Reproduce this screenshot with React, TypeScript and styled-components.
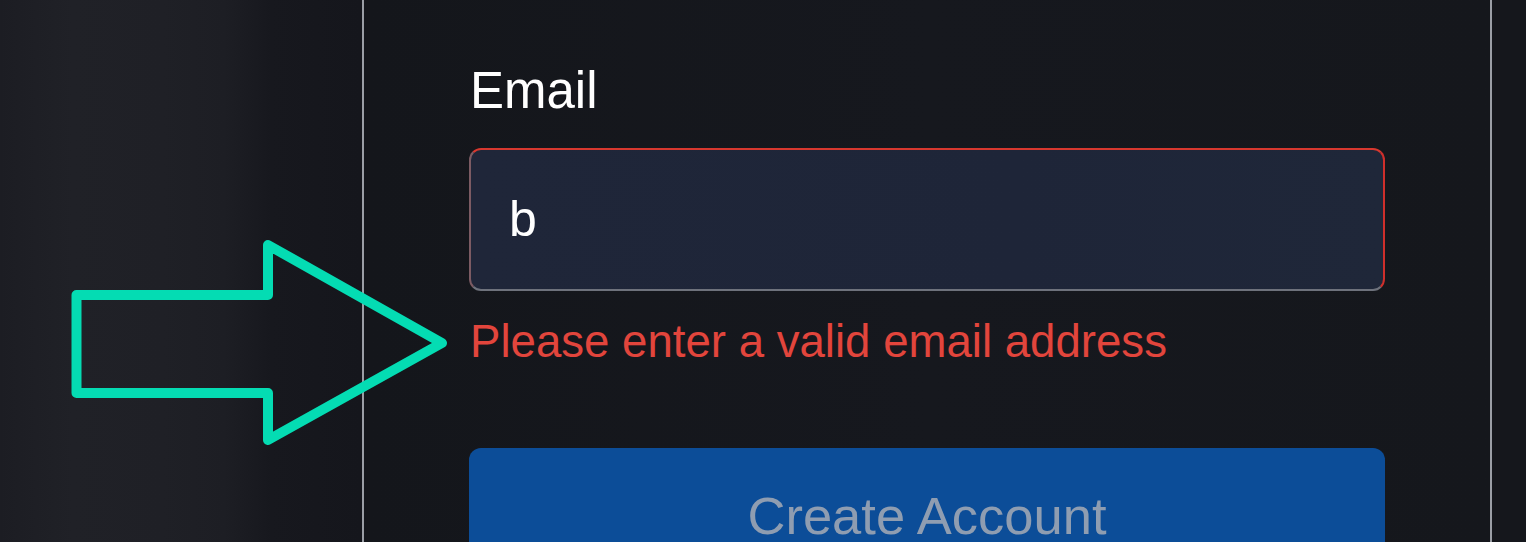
import React from "react";
import styled, { createGlobalStyle } from "styled-components";

const GlobalStyle = createGlobalStyle`
  html, body {
    margin: 0;
    padding: 0;
    background: #15171d;
    overflow: hidden;
  }
  * { box-sizing: border-box; }
`;

const Page = styled.div`
  position: relative;
  width: 1526px;
  height: 542px;
  display: flex;
  flex-direction: row;
  overflow: hidden;
  font-family: "Liberation Sans", Arial, sans-serif;
  background: #15171d;
`;

const SideArea = styled.div<{ $w: number; $bg: string }>`
  width: ${(p) => p.$w}px;
  flex: 0 0 auto;
  height: 100%;
  background: ${(p) => p.$bg};
`;

const Divider = styled.div`
  width: 2px;
  flex: 0 0 auto;
  height: 100%;
  background: #9b9ea5;
`;

const Panel = styled.div`
  flex: 1;
  height: 100%;
  background: linear-gradient(90deg, #14161b 0%, #16181e 50%, #15171c 100%);
  padding: 63px 105px 0 105px;
  display: flex;
  flex-direction: column;
  & > * {
    flex-shrink: 0;
  }
`;

const Label = styled.label`
  font-size: 51px;
  line-height: 56px;
  color: #ffffff;
  padding-left: 1px;
`;

const Input = styled.div`
  margin-top: 29px;
  height: 143px;
  border-radius: 12px;
  border: 2px solid;
  border-color: #d7382f #cf2f2b #6e727c #7c5b63;
  background: linear-gradient(90deg, #1f2639 0%, #1e2538 60%, #1f2739 100%);
  display: flex;
  align-items: center;
  padding-left: 38px;
  font-size: 50px;
  line-height: 60px;
  color: #ffffff;
  padding-bottom: 2px;
`;

const ErrorText = styled.div`
  margin-top: 25px;
  font-size: 45.6px;
  line-height: 52px;
  color: #e2453c;
  padding-left: 1px;
`;

const Button = styled.button`
  margin-top: 80px;
  height: 136px;
  border: none;
  border-radius: 12px;
  background: #0c4d98;
  color: #8f9db1;
  font-family: "Liberation Sans", Arial, sans-serif;
  font-size: 52.5px;
  line-height: 60px;
  padding: 38px 0 38px;
  display: flex;
  justify-content: center;
  align-items: flex-start;
`;

const ArrowOverlay = styled.svg`
  position: absolute;
  left: 0;
  top: 0;
  width: 1526px;
  height: 542px;
  pointer-events: none;
`;

export default function App() {
  return (
    <>
      <GlobalStyle />
      <Page>
        <SideArea
          $w={362}
          $bg="linear-gradient(90deg, #1c1d23 0%, #202127 20%, #1f2026 45%, #1d1e24 62%, #17181e 75%, #15161c 100%)"
        />
        <Divider />
        <Panel>
          <Label>Email</Label>
          <Input>b</Input>
          <ErrorText>Please enter a valid email address</ErrorText>
          <Button>Create Account</Button>
        </Panel>
        <Divider />
        <SideArea $w={34} $bg="#15171c" />
        <ArrowOverlay viewBox="0 0 1526 542">
          <path
            d="M76.5 295 L268 295 L268 245 L442 343 L268 440 L268 393 L76.5 393 Z"
            fill="none"
            stroke="#04dcb3"
            strokeWidth={10}
            strokeLinejoin="round"
          />
        </ArrowOverlay>
      </Page>
    </>
  );
}
